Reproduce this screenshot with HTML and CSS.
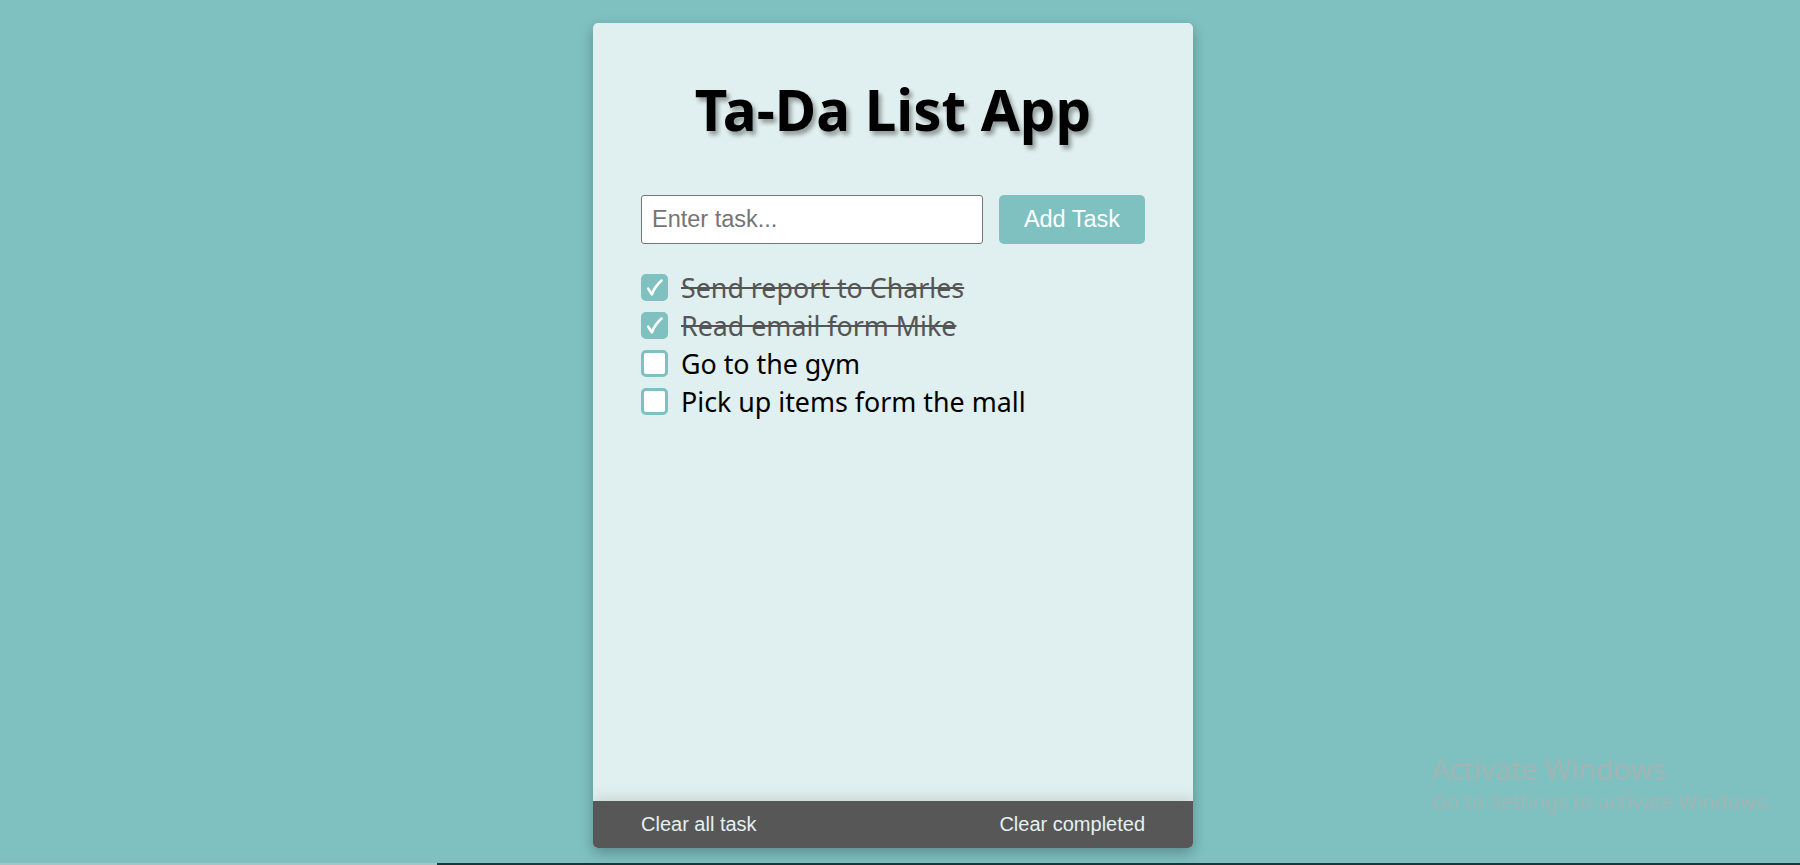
FILE: index.html
```html
<!DOCTYPE html>
<html lang="en">
<head>
<meta charset="utf-8">
<title>Ta-Da List App</title>
<link rel="stylesheet" href="styles.css">
</head>
<body>
<div class="page">
  <div class="card">
    <div class="main">
      <h1 class="title">Ta-Da List App</h1>
      <form class="form">
        <input class="task-input" type="text" placeholder="Enter task...">
        <button class="add-btn" type="button">Add Task</button>
      </form>
      <ul class="list">
        <li class="item done"><span class="box"><svg viewBox="0 0 27 27" width="27" height="27"><path d="M7.2 14.6 L10.8 20.4 Q14.2 12 20.6 6.6" fill="none" stroke="#fff" stroke-width="2.6" stroke-linecap="round" stroke-linejoin="round"/></svg></span><span class="label">Send report to Charles</span></li>
        <li class="item done"><span class="box"><svg viewBox="0 0 27 27" width="27" height="27"><path d="M7.2 14.6 L10.8 20.4 Q14.2 12 20.6 6.6" fill="none" stroke="#fff" stroke-width="2.6" stroke-linecap="round" stroke-linejoin="round"/></svg></span><span class="label">Read email form Mike</span></li>
        <li class="item"><span class="box"></span><span class="label">Go to the gym</span></li>
        <li class="item"><span class="box"></span><span class="label">Pick up items form the mall</span></li>
      </ul>
    </div>
    <div class="footer">
      <span class="footer-link">Clear all task</span>
      <span class="footer-link">Clear completed</span>
    </div>
  </div>
</div>
<div class="watermark">
  <div class="wm-title">Activate Windows</div>
  <div class="wm-sub">Go to Settings to activate Windows.</div>
</div>
<div class="taskbar"><span class="taskbar-lit"></span></div>
</body>
</html>
```

FILE: styles.css
```css
html, body {
  margin: 0;
  padding: 0;
}

body {
  background: #7fc1c1;
  height: 865px;
  overflow: hidden;
  font-family: "Noto Sans", "Open Sans", sans-serif;
}

.page {
  display: flex;
  justify-content: center;
  padding: 23px 14px 0 0;
}

.card {
  width: 600px;
  height: 825px;
  background: #e0efef;
  border-radius: 5px;
  box-shadow: 0 5px 14px rgba(0, 0, 0, 0.28);
  display: flex;
  flex-direction: column;
  overflow: hidden;
}

.main {
  flex: 1;
  padding: 0 48px;
}

.title {
  margin: 53px 0 0;
  height: 119px;
  font-family: "Noto Sans", "Open Sans", sans-serif;
  font-weight: 700;
  font-size: 56.5px;
  line-height: 68px;
  text-align: center;
  color: #000;
  text-shadow: 3px 4px 4px rgba(0, 0, 0, 0.35);
}

.form {
  display: flex;
  gap: 16px;
  height: 49px;
  margin: 0;
}

.task-input {
  flex: 1;
  box-sizing: border-box;
  height: 49px;
  border: 1px solid #767676;
  border-radius: 3px;
  padding: 0 10px;
  font-family: "Liberation Sans", Arial, sans-serif;
  font-size: 23.5px;
  color: #000;
  background: #fff;
}

.task-input::placeholder {
  color: #757575;
}

.add-btn {
  width: 146px;
  height: 49px;
  border: none;
  border-radius: 5px;
  background: #7fc1c1;
  color: #fff;
  font-family: "Liberation Sans", Arial, sans-serif;
  font-size: 23.5px;
  padding: 0;
}

.list {
  list-style: none;
  margin: 24px 0 0;
  padding: 0;
}

.item {
  display: flex;
  align-items: center;
  gap: 13px;
  height: 38px;
  font-size: 26.8px;
  color: #000;
}

.box {
  box-sizing: border-box;
  width: 27px;
  height: 27px;
  flex: none;
  border-radius: 5px;
  border: 3px solid #7fc1c1;
  background: #fff;
  position: relative;
}

.box svg {
  position: absolute;
  left: -3px;
  top: -3px;
  display: block;
}

.item.done .box {
  background: #7fc1c1;
}

.item.done .label {
  color: #555;
  text-decoration: line-through;
  text-decoration-color: #555;
  text-decoration-thickness: 2px;
}

.footer {
  height: 47px;
  flex: none;
  background: #575757;
  box-shadow: 0 -4px 12px rgba(0, 0, 0, 0.1);
  display: flex;
  align-items: center;
  justify-content: space-between;
  padding: 0 48px;
  font-family: "Liberation Sans", Arial, sans-serif;
  font-size: 20px;
  color: #e4f1f1;
}

.watermark {
  position: fixed;
  left: 1432px;
  top: 750px;
  color: #a3b4b4;
  font-family: "Noto Sans", "Open Sans", sans-serif;
}

.wm-title {
  font-size: 28.4px;
  line-height: 38px;
}

.wm-sub {
  font-size: 20.5px;
  line-height: 26px;
}

.taskbar {
  position: fixed;
  left: 0;
  right: 0;
  bottom: 0;
  height: 2px;
  background: #1e3438;
}

.taskbar-lit {
  display: block;
  width: 437px;
  height: 2px;
  background: #a9c2c2;
}
```
